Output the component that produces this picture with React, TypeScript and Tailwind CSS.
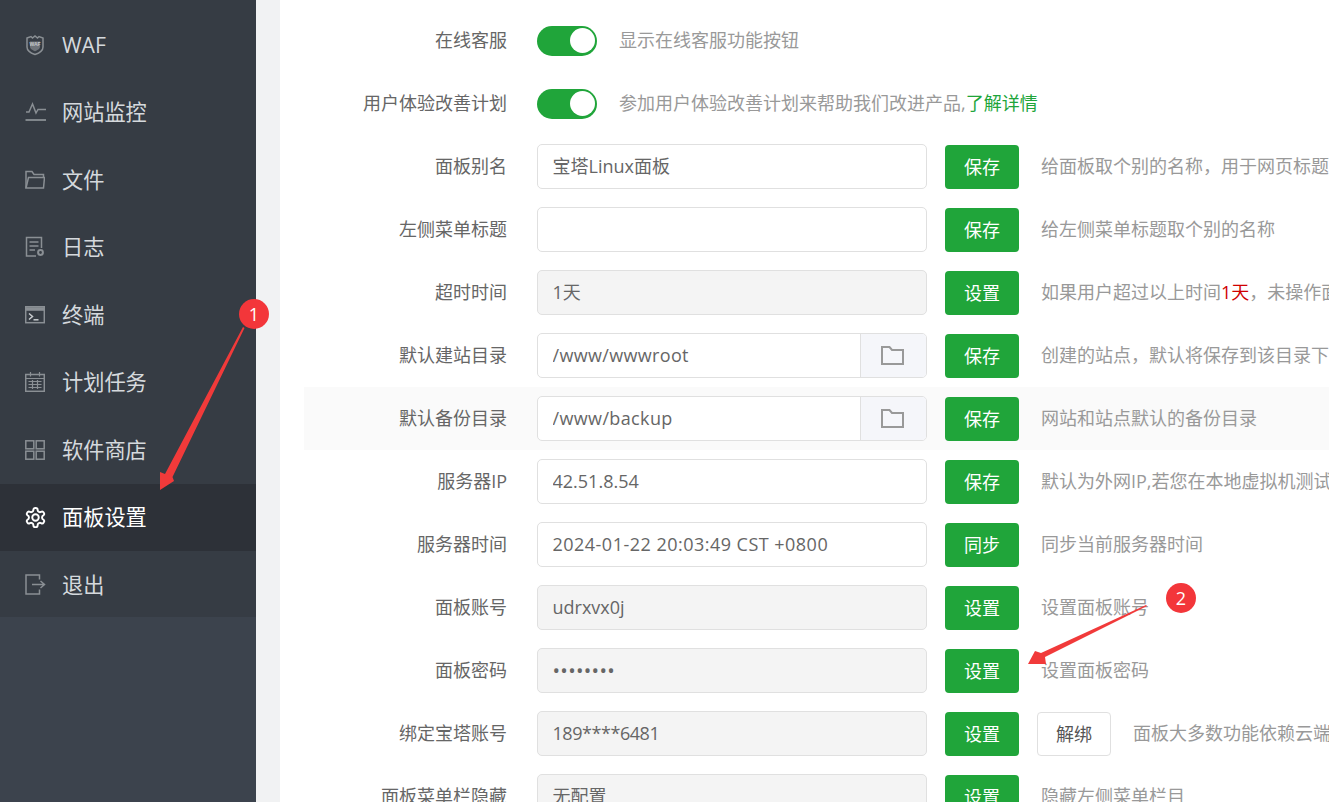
import React from "react";

const FONT = { fontFamily: '"Open Sans","Noto Sans CJK SC",sans-serif' };

const s = { fill: "none", stroke: "#8a8f94", strokeWidth: 1.5 };

const Icons: Record<string, React.ReactNode> = {
  waf: (
    <svg width="20" height="22" viewBox="0 0 20 22">
      <path d="M2 4 L6 2.5 L7.5 4 L10 2 L12.5 4 L14 2.5 L18 4 V13 C18 17 13 19.5 10 20.5 C7 19.5 2 17 2 13 Z" {...s} />
      <path d="M5 7.5 H15 V12.5 C15 15 12 16.5 10 17.3 C8 16.5 5 15 5 12.5 Z" fill="#6f747a" />
      <text x="10" y="12.4" textAnchor="middle" fontSize="5" fontWeight="700" fill="#c4c7ca" fontFamily="Liberation Sans">WAF</text>
    </svg>
  ),
  monitor: (
    <svg width="22" height="22" viewBox="0 0 22 22">
      <path d="M1 11 H4 L7.5 3 L11 12 L13 8.5 H21" {...s} />
      <path d="M0.5 19 H21" {...s} strokeWidth={1.8} />
    </svg>
  ),
  folder: (
    <svg width="20" height="20" viewBox="0 0 20 20">
      <path d="M1 18 V1.5 H7 L9 4.5 H18.5 V7" {...s} />
      <path d="M1 18 L3.5 7.5 H19.5 L18.5 18 Z" {...s} />
    </svg>
  ),
  log: (
    <svg width="20" height="22" viewBox="0 0 20 22">
      <path d="M11 20 H1.5 V1.5 H16.5 V12" {...s} />
      <path d="M4.5 6 H13.5 M4.5 10 H13.5 M4.5 14 H10" {...s} />
      <circle cx="15.5" cy="16.5" r="2.4" {...s} strokeWidth={2} />
    </svg>
  ),
  term: (
    <svg width="20" height="18" viewBox="0 0 20 18">
      <rect x="0.7" y="0.7" width="18.6" height="16" {...s} />
      <path d="M1 3 H19" stroke="#8a8f94" strokeWidth="3.6" />
      <path d="M4 7.5 L7.5 10.5 L4 13.5" fill="none" stroke="#c9ccd0" strokeWidth="1.5" />
      <path d="M8.5 13.8 H13.5" fill="none" stroke="#c9ccd0" strokeWidth="1.5" />
    </svg>
  ),
  cal: (
    <svg width="20" height="20" viewBox="0 0 20 20">
      <rect x="0.7" y="2.5" width="18.6" height="16.8" {...s} />
      <path d="M5.5 0 V4.5 M14.5 0 V4.5 M1 6.5 H19 M3.5 9.5 H16.5 M3.5 12.5 H16.5 M3.5 15.5 H16.5 M7.5 8 V17 M12.5 8 V17" {...s} strokeWidth={1.2} />
    </svg>
  ),
  apps: (
    <svg width="20" height="20" viewBox="0 0 20 20">
      <rect x="0.8" y="0.8" width="8" height="8" {...s} />
      <rect x="11.2" y="0.8" width="8" height="8" {...s} />
      <rect x="0.8" y="11.2" width="8" height="8" {...s} />
      <rect x="11.2" y="11.2" width="8" height="8" {...s} />
    </svg>
  ),
  gear: (
    <svg width="23" height="23" viewBox="0 0 24 24" fill="none" stroke="#fff" strokeWidth="2" strokeLinecap="round" strokeLinejoin="round" className="-ml-[1.5px]">
      <path d="M12.22 2h-.44a2 2 0 0 0-2 2v.18a2 2 0 0 1-1 1.73l-.43.25a2 2 0 0 1-2 0l-.15-.08a2 2 0 0 0-2.73.73l-.22.38a2 2 0 0 0 .73 2.73l.15.1a2 2 0 0 1 1 1.72v.51a2 2 0 0 1-1 1.74l-.15.09a2 2 0 0 0-.73 2.73l.22.38a2 2 0 0 0 2.73.73l.15-.08a2 2 0 0 1 2 0l.43.25a2 2 0 0 1 1 1.73V20a2 2 0 0 0 2 2h.44a2 2 0 0 0 2-2v-.18a2 2 0 0 1 1-1.73l.43-.25a2 2 0 0 1 2 0l.15.08a2 2 0 0 0 2.73-.73l.22-.39a2 2 0 0 0-.73-2.73l-.15-.08a2 2 0 0 1-1-1.74v-.5a2 2 0 0 1 1-1.74l.15-.09a2 2 0 0 0 .73-2.73l-.22-.38a2 2 0 0 0-2.73-.73l-.15.08a2 2 0 0 1-2 0l-.43-.25a2 2 0 0 1-1-1.73V4a2 2 0 0 0-2-2z" />
      <circle cx="12" cy="12" r="3.4" />
    </svg>
  ),
  exit: (
    <svg width="21" height="21" viewBox="0 0 21 21">
      <path d="M14.5 5.5 V1 H1 V20 H14.5 V15.5" {...s} />
      <path d="M7 10.5 H19 M15.5 7 L19.5 10.5 L15.5 14" {...s} />
    </svg>
  ),
};

const NAV = [
  ["waf", "WAF"],
  ["monitor", "网站监控"],
  ["folder", "文件"],
  ["log", "日志"],
  ["term", "终端"],
  ["cal", "计划任务"],
  ["apps", "软件商店"],
  ["gear", "面板设置"],
  ["exit", "退出"],
];

function Sidebar() {
  return (
    <aside className="w-[256px] shrink-0 bg-[#3c434d] h-full">
      <div className="bg-[#363c44] pt-[11px] h-[617px]">
        {NAV.map(([ic, t]) => {
          const active = t === "面板设置";
          return (
            <div
              key={t}
              className={`flex items-center h-[67.5px] ${active ? "bg-[#2d3138] text-white" : "text-[#d5d9dd]"}`}
            >
              <span className="w-[25px] ml-[25px] flex justify-start">{Icons[ic]}</span>
              <span className="ml-[12px] text-[21.2px]">{t}</span>
            </div>
          );
        })}
      </div>
    </aside>
  );
}

function Toggle() {
  return (
    <div className="w-[60px] h-[30px] rounded-full bg-[#20a53a] flex items-center justify-end pr-[2.5px]">
      <div className="w-[25px] h-[25px] rounded-full bg-white" />
    </div>
  );
}

function Btn({ children }: { children: React.ReactNode }) {
  return (
    <div className="w-[74px] h-[44px] ml-[18px] mt-px shrink-0 rounded-[4px] bg-[#20a53a] text-white flex items-center justify-center">
      {children}
    </div>
  );
}

function Folder() {
  return (
    <svg width="23" height="19" viewBox="0 0 23 19" fill="none" stroke="#999" strokeWidth="2" className="-ml-[3px]">
      <path d="M1 18 V1 H8.5 L11 4 H22 V18 Z" />
    </svg>
  );
}

function Field({
  value,
  disabled,
  pick,
  password,
  inputClass = "",
}: {
  value: string;
  disabled?: boolean;
  pick?: boolean;
  password?: boolean;
  inputClass?: string;
}) {
  return (
    <div
      className={`w-[390px] h-[45px] shrink-0 flex rounded-[5px] border border-[#e0e0e0] overflow-hidden ${disabled ? "bg-[#f4f4f4]" : "bg-white"}`}
    >
      <input
        readOnly
        type={password ? "password" : "text"}
        value={value}
        className={`flex-1 min-w-0 pl-[14.5px] pr-[15px] bg-transparent text-[#666] outline-none ${inputClass}`}
      />
      {pick && (
        <div className="w-[66px] border-l border-[#e0e0e0] bg-[#f5f6fa] flex items-center justify-center">
          <Folder />
        </div>
      )}
    </div>
  );
}

function Desc({ children, ml = "ml-[22px]" }: { children: React.ReactNode; ml?: string }) {
  return <div className={`${ml} text-[#999] whitespace-nowrap`}>{children}</div>;
}

function Row({ label, children, shaded }: { label: string; children: React.ReactNode; shaded?: boolean }) {
  return (
    <div className={`flex items-center h-[63px] ${shaded ? "bg-[#fafafa]" : ""}`}>
      <div className="w-[203px] shrink-0 text-right text-[#666]">{label}</div>
      <div className="ml-[30px] flex items-center">{children}</div>
    </div>
  );
}

export default function App() {
  return (
    <div className="relative w-[1329px] h-[802px] overflow-hidden flex bg-[#f1f2f3] text-[18px]" style={FONT}>
      <Sidebar />
      <main className="ml-[24px] flex-1 bg-white pl-[24px] pt-[9px] overflow-hidden">
        <Row label="在线客服">
          <Toggle />
          <Desc>显示在线客服功能按钮</Desc>
        </Row>
        <Row label="用户体验改善计划">
          <Toggle />
          <Desc>
            参加用户体验改善计划来帮助我们改进产品,<span className="text-[#20a53a]">了解详情</span>
          </Desc>
        </Row>
        <Row label="面板别名">
          <Field value="宝塔Linux面板" />
          <Btn>保存</Btn>
          <Desc>给面板取个别的名称，用于网页标题</Desc>
        </Row>
        <Row label="左侧菜单标题">
          <Field value="" />
          <Btn>保存</Btn>
          <Desc>给左侧菜单标题取个别的名称</Desc>
        </Row>
        <Row label="超时时间">
          <Field value="1天" disabled />
          <Btn>设置</Btn>
          <Desc>
            如果用户超过以上时间<span className="text-[#d00000]">1天</span>，未操作面板
          </Desc>
        </Row>
        <Row label="默认建站目录">
          <Field value="/www/wwwroot" pick inputClass="tracking-[0.33px]" />
          <Btn>保存</Btn>
          <Desc>创建的站点，默认将保存到该目录下</Desc>
        </Row>
        <Row label="默认备份目录" shaded>
          <Field value="/www/backup" pick inputClass="tracking-[0.36px]" />
          <Btn>保存</Btn>
          <Desc>网站和站点默认的备份目录</Desc>
        </Row>
        <Row label="服务器IP">
          <Field value="42.51.8.54" />
          <Btn>保存</Btn>
          <Desc>默认为外网IP,若您在本地虚拟机测试</Desc>
        </Row>
        <Row label="服务器时间">
          <Field value="2024-01-22 20:03:49 CST +0800" inputClass="tracking-[0.48px]" />
          <Btn>同步</Btn>
          <Desc>同步当前服务器时间</Desc>
        </Row>
        <Row label="面板账号">
          <Field value="udrxvx0j" disabled />
          <Btn>设置</Btn>
          <Desc>设置面板账号</Desc>
        </Row>
        <Row label="面板密码">
          <Field value="12345678" disabled password inputClass="text-[20px] tracking-[0.3px]" />
          <Btn>设置</Btn>
          <Desc>设置面板密码</Desc>
        </Row>
        <Row label="绑定宝塔账号">
          <Field value="189****6481" disabled inputClass="tracking-[-0.45px]" />
          <Btn>设置</Btn>
          <div className="w-[74px] h-[44px] ml-[18px] mt-px shrink-0 rounded-[4px] border border-[#e0e0e0] bg-white text-[#555] flex items-center justify-center">
            解绑
          </div>
          <Desc>面板大多数功能依赖云端</Desc>
        </Row>
        <Row label="面板菜单栏隐藏">
          <Field value="无配置" disabled />
          <Btn>设置</Btn>
          <Desc>隐藏左侧菜单栏目</Desc>
        </Row>
      </main>

      <svg className="absolute left-0 top-0 pointer-events-none" width="1329" height="802">
        <polygon points="243,327 244.5,328 172.5,477 174,481 160,490 160,472 165,474" fill="#f13a3a" />
        <polygon points="1146,605 1147,606 1045,657 1046,664 1028,664 1035,651 1041,653" fill="#f13a3a" />
      </svg>
      <div className="absolute left-[239px] top-[299px] w-[30px] h-[30px] rounded-full bg-[#f3363a] text-white flex items-center justify-center text-[18px]">
        1
      </div>
      <div className="absolute left-[1166px] top-[583px] w-[30px] h-[30px] rounded-full bg-[#f3363a] text-white flex items-center justify-center text-[18px]">
        2
      </div>
    </div>
  );
}
